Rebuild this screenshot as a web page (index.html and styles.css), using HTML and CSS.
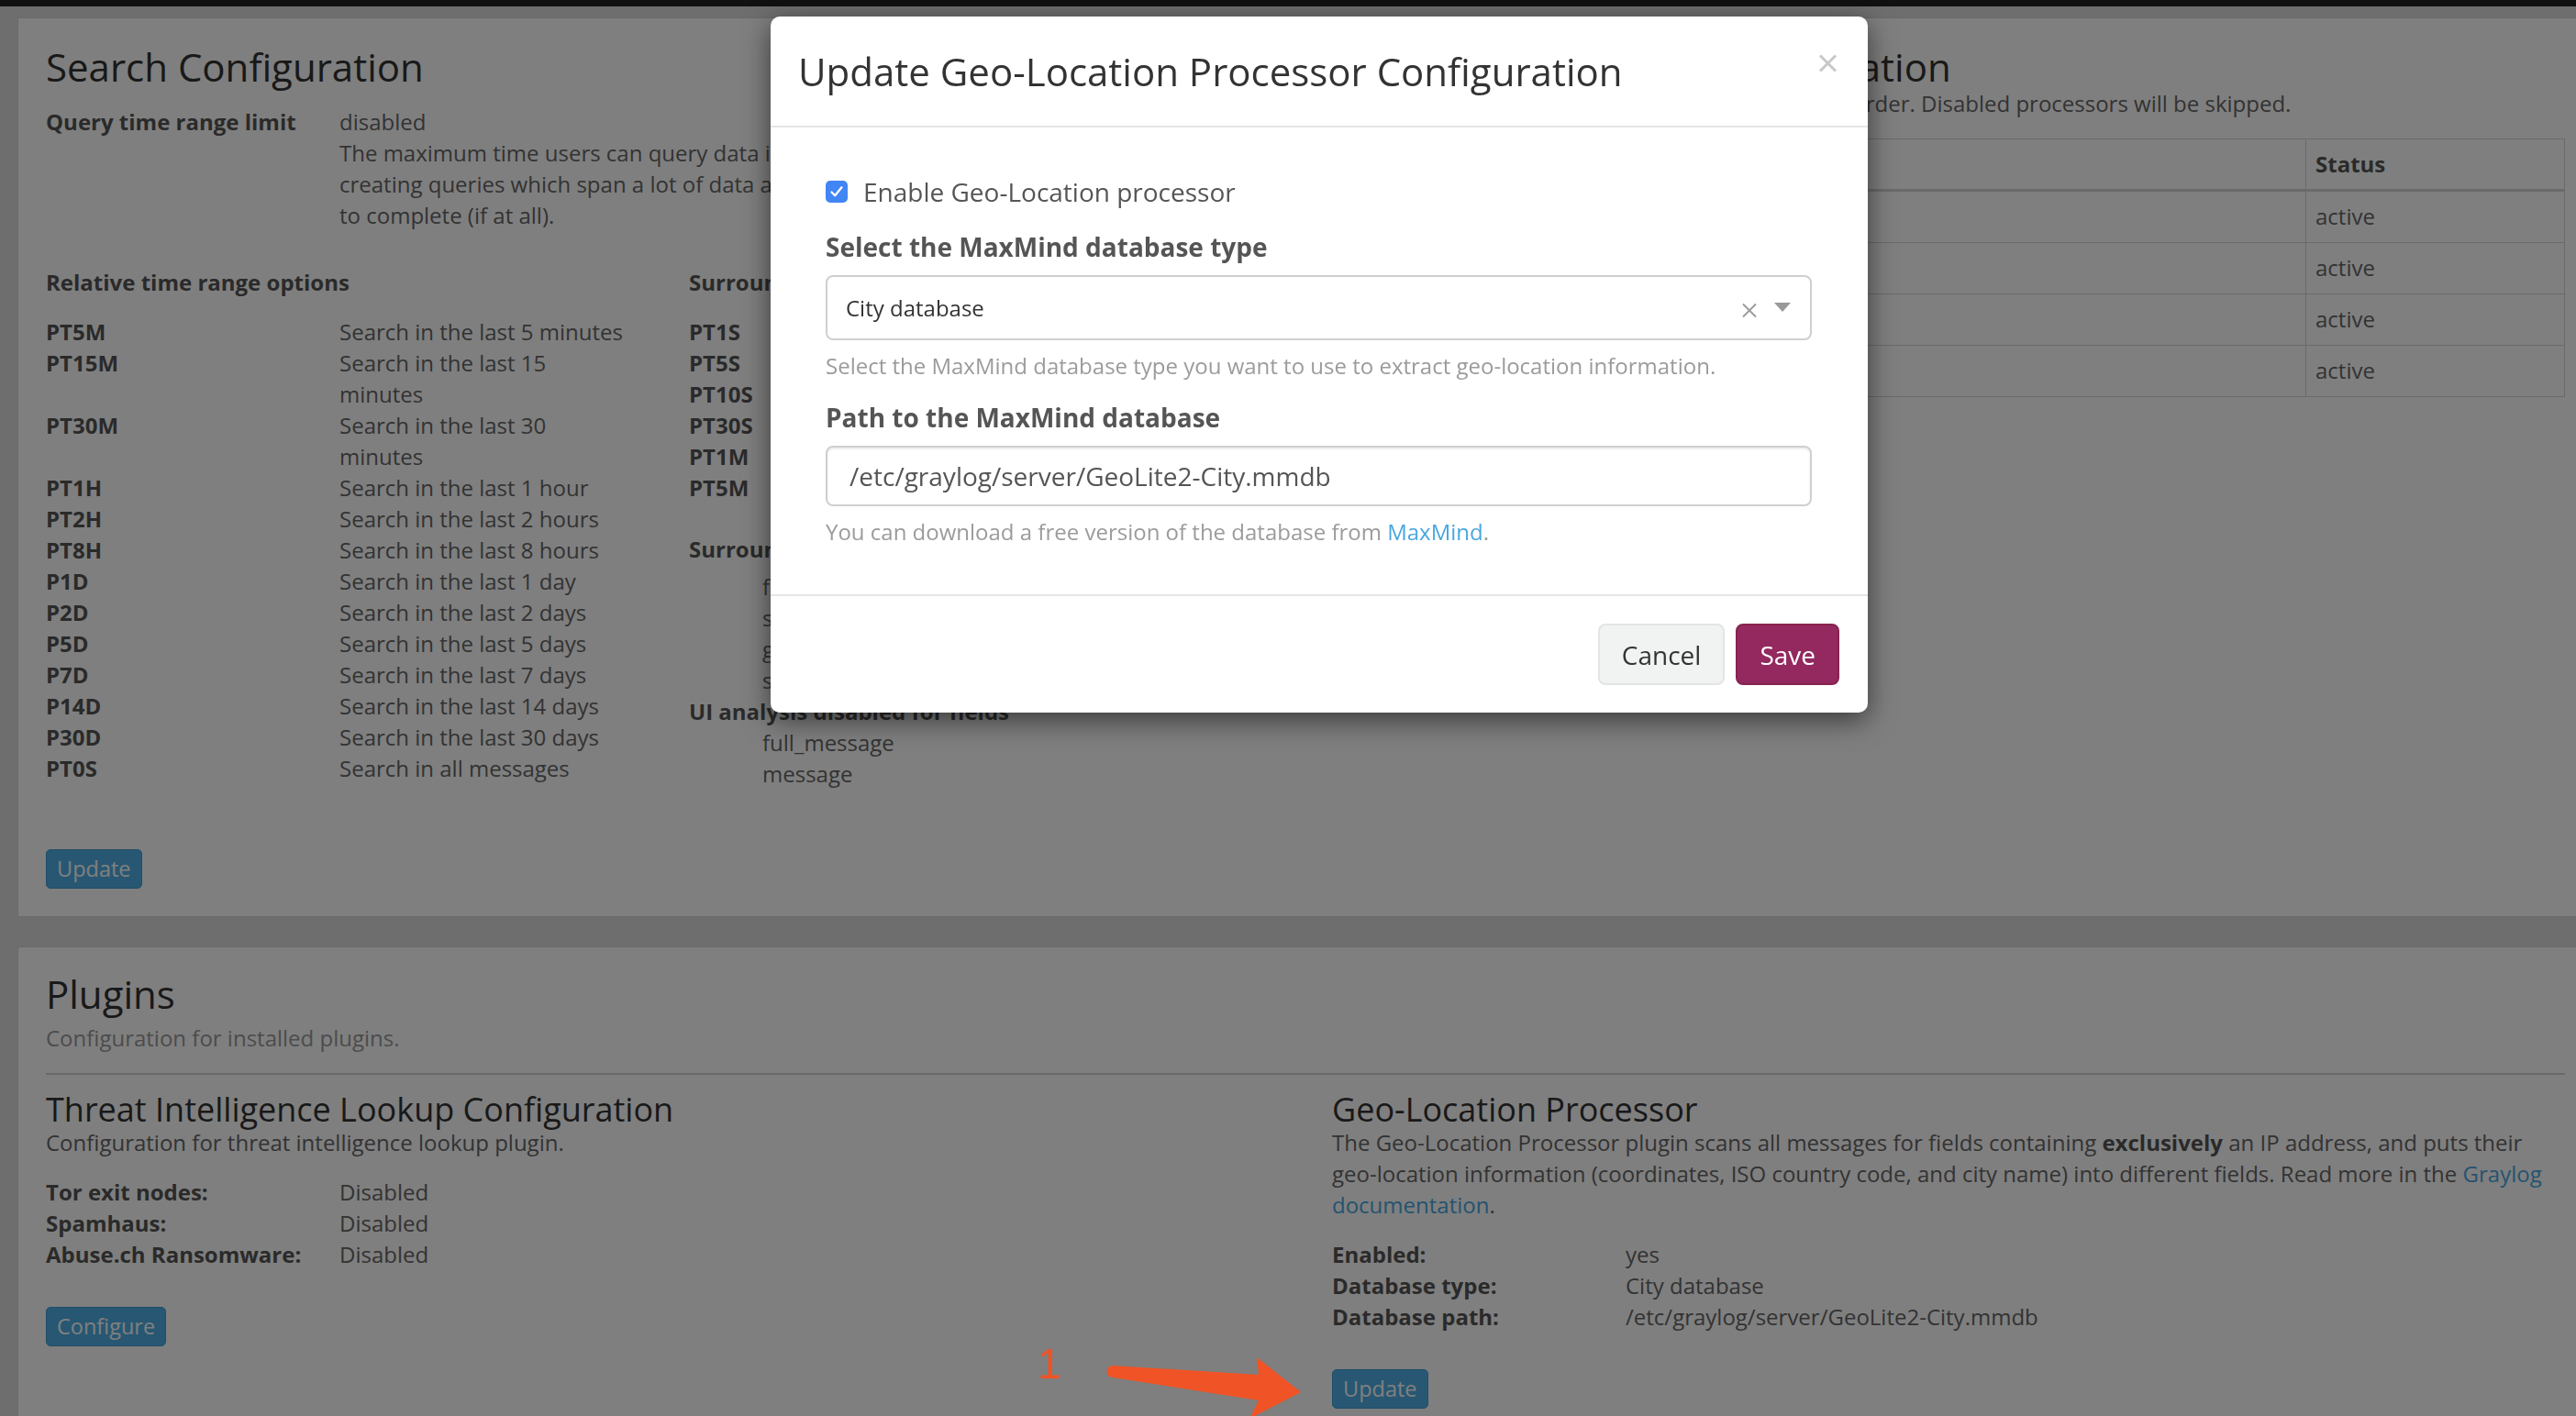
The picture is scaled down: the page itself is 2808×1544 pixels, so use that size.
FILE: index.html
```html
<!DOCTYPE html>
<html lang="en">
<head>
<meta charset="utf-8">
<title>Configurations</title>
<link rel="stylesheet" href="styles.css">
</head>
<body>
<div class="navbar"></div>
<main class="page">
  <section class="panel">
    <div class="col">
      <h2 class="h2">Search Configuration</h2>
      <dl class="deflist">
        <dt>Query time range limit</dt>
        <dd>disabled<br>The maximum time users can query data in the past. This prevents users from accidentally<br>creating queries which span a lot of data and would need a long time and many resources<br>to complete (if at all).</dd>
      </dl>
      <div class="subcols">
        <div>
          <div class="subhead">Relative time range options</div>
          <dl class="deflist narrow">
            <dt>PT5M</dt><dd>Search in the last 5 minutes</dd>
            <dt>PT15M</dt><dd>Search in the last 15 minutes</dd>
            <dt>PT30M</dt><dd>Search in the last 30 minutes</dd>
            <dt>PT1H</dt><dd>Search in the last 1 hour</dd>
            <dt>PT2H</dt><dd>Search in the last 2 hours</dd>
            <dt>PT8H</dt><dd>Search in the last 8 hours</dd>
            <dt>P1D</dt><dd>Search in the last 1 day</dd>
            <dt>P2D</dt><dd>Search in the last 2 days</dd>
            <dt>P5D</dt><dd>Search in the last 5 days</dd>
            <dt>P7D</dt><dd>Search in the last 7 days</dd>
            <dt>P14D</dt><dd>Search in the last 14 days</dd>
            <dt>P30D</dt><dd>Search in the last 30 days</dd>
            <dt>PT0S</dt><dd>Search in all messages</dd>
          </dl>
        </div>
        <div>
          <div class="subhead">Surrounding time range options</div>
          <dl class="deflist">
            <dt>PT1S</dt><dd>1 second</dd>
            <dt>PT5S</dt><dd>5 seconds</dd>
            <dt>PT10S</dt><dd>10 seconds</dd>
            <dt>PT30S</dt><dd>30 seconds</dd>
            <dt>PT1M</dt><dd>1 minute</dd>
            <dt>PT5M</dt><dd>5 minutes</dd>
          </dl>
          <dl class="fieldlist">
            <dt>Surrounding search filter fields</dt>
            <dd class="first">file</dd>
            <dd>source</dd>
            <dd>gl2_source_input</dd>
            <dd>source_file</dd>
            <dt>UI analysis disabled for fields</dt>
            <dd>full_message</dd>
            <dd>message</dd>
          </dl>
        </div>
      </div>
      <div class="actions search-actions"><button class="btn btn-info" type="button">Update</button></div>
    </div>
    <div class="col">
      <h2 class="h2">Message Processors Configuration</h2>
      <p class="text">The following message processors are executed in order. Disabled processors will be skipped.</p>
      <table class="proc-table">
        <thead>
          <tr><th class="c-num">#</th><th>Processor</th><th class="c-status">Status</th></tr>
        </thead>
        <tbody>
          <tr><td>1</td><td>Message Filter Chain</td><td>active</td></tr>
          <tr><td>2</td><td>Pipeline Processor</td><td>active</td></tr>
          <tr><td>3</td><td>AWS Instance Name Lookup</td><td>active</td></tr>
          <tr><td>4</td><td>GeoIP Resolver</td><td>active</td></tr>
        </tbody>
      </table>
      <div class="actions proc-actions"><button class="btn btn-info" type="button">Update</button></div>
    </div>
  </section>

  <section class="panel">
    <div class="plugins-head">
      <h2 class="h2">Plugins</h2>
      <p class="desc">Configuration for installed plugins.</p>
      <hr class="rule">
    </div>
    <div class="col">
      <h3 class="h3">Threat Intelligence Lookup Configuration</h3>
      <p class="text">Configuration for threat intelligence lookup plugin.</p>
      <dl class="deflist plugin-dl">
        <dt>Tor exit nodes:</dt><dd>Disabled</dd>
        <dt>Spamhaus:</dt><dd>Disabled</dd>
        <dt>Abuse.ch Ransomware:</dt><dd>Disabled</dd>
      </dl>
      <div class="actions plugin-actions"><button class="btn btn-info" type="button">Configure</button></div>
    </div>
    <div class="col">
      <h3 class="h3">Geo-Location Processor</h3>
      <p class="text">The Geo-Location Processor plugin scans all messages for fields containing <strong>exclusively</strong> an IP address, and puts their geo-location information (coordinates, ISO country code, and city name) into different fields. Read more in the <a href="#" class="link">Graylog documentation</a>.</p>
      <dl class="deflist plugin-dl">
        <dt>Enabled:</dt><dd>yes</dd>
        <dt>Database type:</dt><dd>City database</dd>
        <dt>Database path:</dt><dd>/etc/graylog/server/GeoLite2-City.mmdb</dd>
      </dl>
      <div class="actions plugin-actions"><button class="btn btn-info" type="button">Update</button></div>
    </div>
  </section>
</main>

<div class="backdrop"></div>

<div class="modal" role="dialog">
  <div class="modal-header">
    <h4 class="modal-title">Update Geo-Location Processor Configuration</h4>
    <button class="close" type="button" aria-label="Close">
      <svg width="21" height="20" viewBox="0 0 21 20"><path d="M2 1.5 L19 18.5 M19 1.5 L2 18.5" stroke="#c8c8c8" stroke-width="3" fill="none"/></svg>
    </button>
  </div>
  <div class="modal-body">
    <label class="check">
      <span class="box"><svg width="24" height="24" viewBox="0 0 24 24"><path d="M6.5 12.5 L10.2 16.3 L17.5 7.3" stroke="#fff" stroke-width="2.3" fill="none" stroke-linecap="round" stroke-linejoin="round"/></svg></span>
      Enable Geo-Location processor
    </label>
    <div class="form-group">
      <div class="control-label">Select the MaxMind database type</div>
      <div class="select">
        <span class="select-value">City database</span>
        <span class="select-clear"><svg width="18" height="17" viewBox="0 0 18 17"><path d="M2 1.5 L16 15.5 M16 1.5 L2 15.5" stroke="#999" stroke-width="1.8" fill="none"/></svg></span>
        <span class="select-arrow"></span>
      </div>
      <p class="help">Select the MaxMind database type you want to use to extract geo-location information.</p>
    </div>
    <div class="form-group second">
      <div class="control-label">Path to the MaxMind database</div>
      <div class="input">/etc/graylog/server/GeoLite2-City.mmdb</div>
      <p class="help">You can download a free version of the database from <a href="#" class="link">MaxMind</a>.</p>
    </div>
  </div>
  <div class="modal-footer">
    <button class="mbtn mbtn-default" type="button">Cancel</button>
    <button class="mbtn mbtn-primary" type="button">Save</button>
  </div>
</div>

<svg class="annotation" width="2808" height="1544" viewBox="0 0 2808 1544">
  <text x="1131" y="1503" class="anno-num">1</text>
  <circle cx="1213" cy="1495.5" r="6.5" fill="#f05325"/>
  <polygon points="1213,1489 1372,1499 1370,1480 1418,1518 1362,1547 1372,1527 1213,1502" fill="#f05325"/>
</svg>
</body>
</html>
```

FILE: styles.css
```css
* { box-sizing: border-box; }

html, body { margin: 0; padding: 0; }

body {
  width: 2808px;
  height: 1544px;
  overflow: hidden;
  position: relative;
  background: #dcdcdc;
  font-family: "Open Sans", "DejaVu Sans", sans-serif;
  font-size: 24px;
  line-height: 34px;
  color: #666;
}

.navbar { height: 7px; background: #222; }

.page {
  display: flex;
  flex-direction: column;
  align-items: flex-start;
  gap: 32px;
  padding: 12px 0 0 19px;
}

.panel {
  display: grid;
  grid-template-columns: 1351px 1344px;
  column-gap: 51px;
  align-items: start;
  background: #fff;
  border: 1px solid #d2d2d2;
  padding: 30px 30px 30px 30px;
}

.panel + .panel { padding-top: 28px; }

.h2 {
  margin: 0;
  font-size: 42px;
  line-height: 46px;
  font-weight: 400;
  color: #333;
}

.h3 {
  margin: 0;
  font-size: 36px;
  line-height: 38px;
  font-weight: 400;
  color: #333;
}

.text { margin: 0; color: #666; }
.text strong { color: #555; }

.link { color: #4aa7e0; text-decoration: none; }

.deflist {
  display: grid;
  grid-template-columns: 320px 1fr;
  margin: 0;
}
.deflist dt { font-weight: 700; color: #555; }
.deflist dd { margin: 0; }

.col > .h2 + .deflist { margin-top: 20px; }

.narrow { grid-template-columns: 320px 316px; }

.subcols {
  display: grid;
  grid-template-columns: 650px 650px;
  column-gap: 51px;
  margin-top: 39px;
}

.subhead { font-weight: 700; color: #555; margin-bottom: 20px; }

.fieldlist { margin: 33px 0 0 0; }
.fieldlist dt { font-weight: 700; color: #555; }
.fieldlist dd { margin: 0 0 0 80px; }
.fieldlist dd.first { margin-top: 7px; }

.actions { display: flex; }
.search-actions { margin-top: 65px; }
.proc-actions { margin-top: 24px; }
.plugin-actions { margin-top: 40px; }

.btn {
  font-family: inherit;
  font-size: 23.5px;
  line-height: 31px;
  padding: 5px 11px;
  border-radius: 5px;
  cursor: pointer;
}
.btn-info {
  background: #4fafe4;
  border: 1px solid #3f9cd0;
  color: #fff;
}

.proc-table {
  width: 1344px;
  margin-top: 21px;
  border-collapse: collapse;
  border: 1px solid #d4d4d4;
}
.proc-table th,
.proc-table td {
  text-align: left;
  padding: 10px 10px 11px;
  border: 1px solid #d4d4d4;
  font-size: 24px;
  line-height: 34px;
}
.proc-table th { color: #555; font-weight: 700; border-bottom: 3px solid #d4d4d4; padding-bottom: 10px; }
.proc-table .c-num { width: 90px; }
.proc-table .c-status { width: 282px; }

.plugins-head { grid-column: 1 / -1; }
.desc { margin: 8px 0 0; color: #999; }
.rule {
  margin: 21px 0 19px;
  border: 0;
  border-top: 2px solid #d2d2d2;
  height: 0;
}
.plugin-dl { margin-top: 20px; }

/* ---------- modal ---------- */
.backdrop {
  position: fixed;
  inset: 0;
  background: rgba(0, 0, 0, 0.5);
  z-index: 10;
}

.modal {
  position: absolute;
  left: 840px;
  top: 18px;
  width: 1196px;
  background: #fff;
  border-radius: 10px;
  box-shadow: 0 8px 30px rgba(0, 0, 0, 0.55);
  z-index: 20;
  color: #555;
}

.modal-header {
  position: relative;
  padding: 37px 30px 36px;
  border-bottom: 2px solid #e5e5e5;
}
.modal-title {
  margin: 0;
  font-size: 42px;
  line-height: 46px;
  font-weight: 400;
  color: #333;
}
.close {
  position: absolute;
  top: 41px;
  right: 33px;
  width: 21px;
  height: 20px;
  padding: 0;
  border: 0;
  background: none;
  display: flex;
}

.modal-body { padding: 51px 61px 51px 60px; }

.check {
  display: flex;
  align-items: center;
  gap: 17px;
  font-size: 28px;
  line-height: 38px;
  color: #555;
}
.box {
  width: 24px;
  height: 24px;
  border-radius: 5px;
  background: #4285f4;
  display: flex;
}

.form-group { margin-top: 22px; }
.form-group.second { margin-top: 20px; }

.control-label {
  font-size: 28px;
  line-height: 38px;
  font-weight: 700;
  color: #555;
  margin-bottom: 12px;
}

.select {
  height: 71px;
  border: 2px solid #cfcfcf;
  border-radius: 8px;
  display: flex;
  align-items: center;
  padding: 0 21px 0 20px;
}
.select-value { flex: 1; color: #333; font-size: 24px; }
.select-clear { display: flex; margin-top: 5px; }
.select-arrow {
  margin-left: 18px;
  width: 0;
  height: 0;
  border-left: 9.5px solid transparent;
  border-right: 9.5px solid transparent;
  border-top: 10px solid #999;
  margin-top: -2px;
}

.input {
  height: 66px;
  border: 2px solid #cfcfcf;
  border-radius: 8px;
  box-shadow: inset 0 2px 2px rgba(0, 0, 0, 0.075);
  padding: 0 24px;
  display: flex;
  align-items: center;
  font-size: 28px;
  color: #555;
}

.help {
  margin: 11px 0 0;
  font-size: 24px;
  line-height: 34px;
  color: #9b9b9b;
}

.modal-footer {
  border-top: 2px solid #e5e5e5;
  padding: 30px 31px 30px;
  display: flex;
  justify-content: flex-end;
  gap: 12px;
}

.mbtn {
  height: 67px;
  padding: 0 24px;
  border-radius: 8px;
  font-family: inherit;
  font-size: 28px;
  line-height: 40px;
  cursor: pointer;
}
.mbtn-default {
  background: #f1f2f2;
  border: 2px solid #e3e4e4;
  color: #333;
}
.mbtn-primary {
  background: #93295f;
  border: 2px solid #86234f;
  color: #fff;
}

.annotation {
  position: absolute;
  left: 0;
  top: 0;
  z-index: 30;
  pointer-events: none;
}
.anno-num {
  font-family: "Liberation Sans", "Open Sans", sans-serif;
  font-weight: 400;
  font-size: 46px;
  fill: #f05325;
}
```
